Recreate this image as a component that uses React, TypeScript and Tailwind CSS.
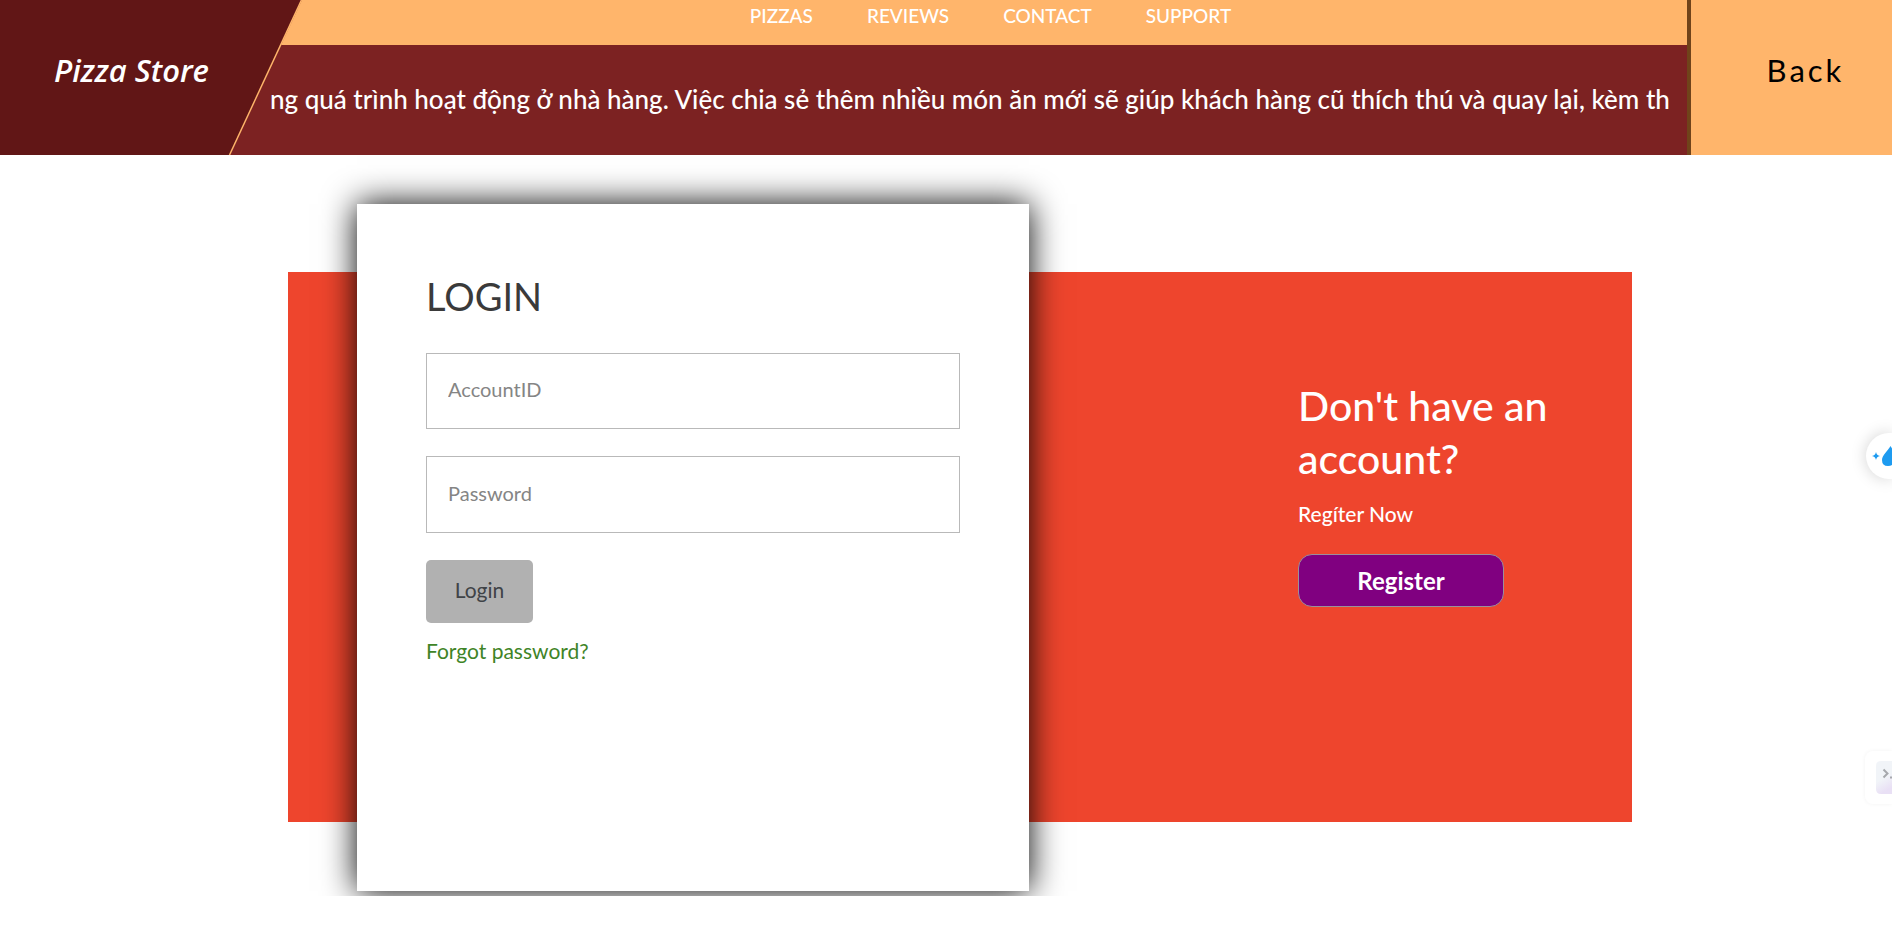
const links = ["PIZZAS", "REVIEWS", "CONTACT", "SUPPORT"];

function Header() {
  return (
    <header className="flex h-[155px] overflow-hidden bg-[#7c2222]">
      <div className="relative z-10 -mr-[72px] flex w-[302px] shrink-0 items-center pb-[15px] pl-[54px]">
        <svg className="absolute inset-0 size-full" viewBox="0 0 302 155" preserveAspectRatio="none" aria-hidden="true">
          <path d="M0 0H302L230 155H0Z" fill="#611616" />
          <path d="M301.5 0L229.5 155" stroke="#ffb56b" strokeWidth="1.5" />
        </svg>
        <a href="#home" className="relative font-['Open_Sans',sans-serif] text-[31px] font-semibold italic text-white">
          Pizza Store
        </a>
      </div>
      <div className="flex min-w-0 flex-1 flex-col">
        <nav className="flex h-[45px] justify-center gap-[54px] bg-[#ffb56b] pl-[64px] pt-[3px]">
          {links.map((label) => (
            <a key={label} href="#menu" className="text-[19px] font-medium leading-[26px] text-white">
              {label}
            </a>
          ))}
        </nav>
        <div className="flex flex-1 items-center pl-[40px]">
          <p className="overflow-hidden whitespace-nowrap pb-[2px] text-[26px] font-medium text-white">
            ng quá trình hoạt động ở nhà hàng. Việc chia sẻ thêm nhiều món ăn mới sẽ giúp khách hàng cũ thích thú và
            quay lại, kèm th
          </p>
        </div>
      </div>
      <a
        href="#back"
        className="flex w-[205px] shrink-0 items-center justify-center border-l-4 border-[#70431a] bg-[#ffb56b] pb-[15px] pl-7 text-[31px] tracking-[3px] text-black"
      >
        Back
      </a>
    </header>
  );
}

function LoginCard() {
  return (
    <form className="ml-[69px] min-h-[687px] w-1/2 shrink-0 bg-white px-[69px] pt-16 text-[#3a3a3a] shadow-[0_0_32px_#000]" onSubmit={(e) => e.preventDefault()}>
      <h1 className="text-[38px] leading-[56px]">LOGIN</h1>
      <input
        aria-label="AccountID"
        placeholder="AccountID"
        className="mt-[29px] block h-[76px] w-full border border-[#b9b9b9] px-[21px] pb-1 text-[20px] placeholder:text-[#858585]"
      />
      <input
        aria-label="Password"
        type="password"
        placeholder="Password"
        className="mt-[27px] block h-[77px] w-full border border-[#b9b9b9] px-[21px] pb-1 text-[20px] placeholder:text-[#858585]"
      />
      <button className="mt-[27px] block h-[63px] w-[107px] rounded-[5px] bg-[#b1b1b1] pb-1 text-[21px] text-[#3f4347]">Login</button>
      <a href="#forgot" className="mt-3 inline-block text-[21px] leading-8 text-[#3f8427]">
        Forgot password?
      </a>
    </form>
  );
}

function RegisterPanel() {
  return (
    <section className="mr-[52px] mt-[175px] w-[282px] text-white">
      <h2 className="text-[41px] font-medium leading-[53px]">Don't have an account?</h2>
      <p className="mt-[13px] text-[21px] font-medium leading-8">Regíter Now</p>
      <button className="mt-6 block h-[53px] w-[206px] rounded-[14px] border border-[#9b8f9b] bg-[#800080] text-[24px] font-bold">
        Register
      </button>
    </section>
  );
}

function FloatingTools() {
  return (
    <aside aria-label="Assistant tools">
      <button
        aria-label="Open assistant"
        className="absolute right-0 top-[433px] flex h-[46px] w-[26px] items-center overflow-visible rounded-l-full bg-white shadow-[0_0_16px_#0000002e]"
      >
        <svg width="26" height="46" viewBox="0 0 26 46" fill="#1e9bf0" aria-hidden="true">
          <path d="M10 19Q10.600 22.400 14 23Q10.600 23.600 10 27Q9.400 23.600 6 23Q9.400 22.400 10 19Z" />
          <path d="M24.500 13C22 18 16 22 16 27Q16 33 22 33Q24.500 33 26 32V15.500Z" />
        </svg>
      </button>
      <button
        aria-label="Open console"
        className="absolute right-0 top-[751px] flex h-[53px] w-[27px] items-center justify-end rounded-l-[8px] bg-white shadow-[0_0_4px_#0000000d]"
      >
        <svg width="16" height="33" viewBox="0 0 16 33" aria-hidden="true">
          <defs>
            <linearGradient id="tile" x1="0" y1="0" x2="0.300" y2="1">
              <stop offset="0.600" stopColor="#f1f4f8" />
              <stop offset="1" stopColor="#e9e0f5" />
            </linearGradient>
          </defs>
          <path d="M16 0H5Q0 0 0 5V28Q0 33 5 33H16Z" fill="url(#tile)" />
          <path d="M7.500 8.500L11.500 12.500L7.500 16.500" fill="none" stroke="#a6a8ad" strokeWidth="2" />
          <path d="M14 15.500H16V17.500H14Z" fill="#a6a8ad" />
        </svg>
      </button>
    </aside>
  );
}

export default function App() {
  return (
    <div className="relative min-h-screen overflow-hidden bg-white font-['Lato','Open_Sans',sans-serif]">
      <Header />
      <main className="overflow-hidden pb-[5px] pl-7 pt-[49px]">
        <div className="mx-auto w-full max-w-[1344px] bg-[linear-gradient(#ee452d,#ee452d)] bg-[length:100%_550px] bg-[position:0_68px] bg-no-repeat">
          <div className="flex items-start justify-between">
            <LoginCard />
            <RegisterPanel />
          </div>
        </div>
      </main>
      <FloatingTools />
    </div>
  );
}
